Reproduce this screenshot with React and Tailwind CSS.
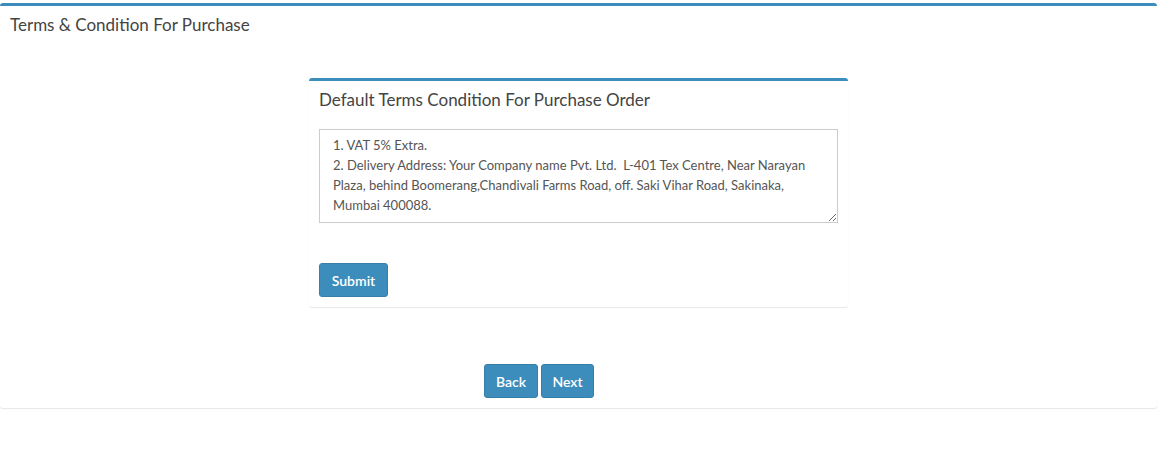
export default function App() {
  const text = `1. VAT 5% Extra.
2. Delivery Address: Your Company name Pvt. Ltd.  L-401 Tex Centre, Near Narayan Plaza, behind Boomerang,Chandivali Farms Road, off. Saki Vihar Road, Sakinaka, Mumbai 400088.`;
  return (
    <div className="min-h-[453px] bg-white pt-[3px] pr-[4px]" style={{ fontFamily: "Lato, 'Open Sans', sans-serif" }}>
      <div className="rounded-[3px] border-t-[3px] border-[#3c8dbc] bg-white shadow-[0_1px_1px_rgba(0,0,0,0.1)]">
        <div className="px-[10px] pt-[10px] pb-[10px]">
          <h3 className="text-[17px] leading-[18px] text-[#444]">Terms &amp; Condition For Purchase</h3>
        </div>
        <div className="flex justify-center pt-[34px]">
          <div className="w-[539px] rounded-[3px] border-t-[3px] border-[#3c8dbc] bg-white shadow-[0_1px_1px_rgba(0,0,0,0.1)]">
            <div className="px-[10px] pt-[10px] pb-[10px]">
              <h3 className="text-[17px] leading-[18px] text-[#444]">Default Terms Condition For Purchase Order</h3>
            </div>
            <div className="px-[10px] pt-[10px]">
              <textarea
                defaultValue={text}
                className="block h-[94px] w-full resize-y border border-[#ccc] px-[13px] py-[5px] text-[13px] leading-[20px] text-[#555] outline-none"
                style={{ fontFamily: "Lato, 'Open Sans', sans-serif" }}
              />
            </div>
            <div className="px-[10px] pt-[40px] pb-[10px]">
              <button className="h-[34px] w-[69px] rounded-[3px] border border-[#367fa9] bg-[#3c8dbc] text-[14px] font-semibold text-white">Submit</button>
            </div>
          </div>
        </div>
        <div className="flex gap-[3px] pt-[57px] pb-[10px] pl-[484px]">
          <button className="h-[34px] w-[54px] rounded-[3px] border border-[#367fa9] bg-[#3c8dbc] text-[14px] font-semibold text-white">Back</button>
          <button className="h-[34px] w-[53px] rounded-[3px] border border-[#367fa9] bg-[#3c8dbc] text-[14px] font-semibold text-white">Next</button>
        </div>
      </div>
    </div>
  );
}
